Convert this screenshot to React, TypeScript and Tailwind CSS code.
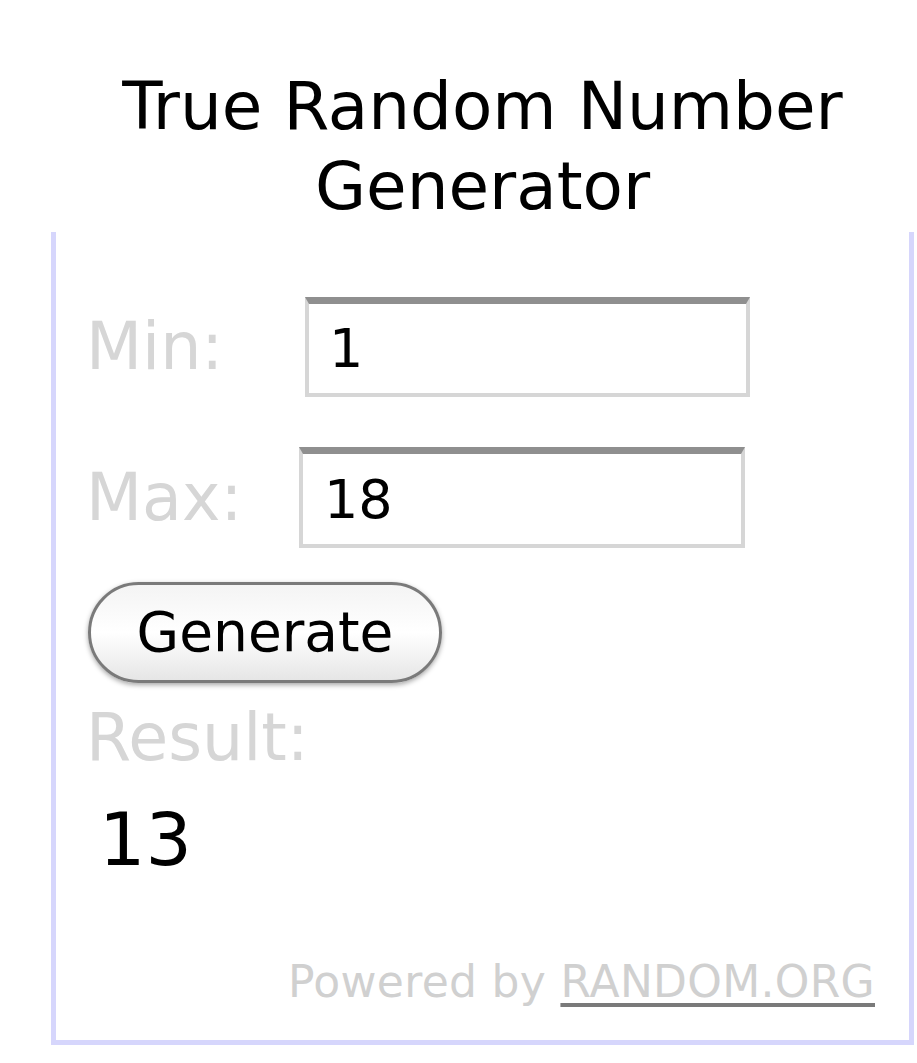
import React from "react";

export default function App() {
  const font = { fontFamily: '"DejaVu Sans", Verdana, sans-serif' };
  return (
    <div className="w-[917px] h-[1063px] bg-white overflow-hidden" style={font}>
      <div className="ml-[51px] w-[863px]">
        <h1 className="pt-[67px] text-center text-[66px] leading-[80px] text-black font-normal">
          True Random Number
          <br />
          Generator
        </h1>
        <div className="mt-[5px] border-x-[5px] border-b-[5px] border-t-0 border-[#d6d6fc] pl-[30px] pb-[30px]">
          <div className="pt-[65px] flex items-center h-[165px]">
            <span className="text-[65px] leading-[80px] text-[#d6d6d6] w-[219px]">Min:</span>
            <div className="w-[445px] h-[100px] border-x-[4px] border-b-[4px] border-[#d6d6d6] border-t-[7px] border-t-[#8f8f8f] bg-white flex items-center pl-[20px] text-[54px] text-black">
              1
            </div>
          </div>
          <div className="mt-[50px] flex items-center h-[101px]">
            <span className="text-[65px] leading-[80px] text-[#d6d6d6] w-[213px]">Max:</span>
            <div className="w-[446px] h-[101px] border-x-[4px] border-b-[4px] border-[#d6d6d6] border-t-[7px] border-t-[#8f8f8f] bg-white flex items-center pl-[21px] text-[54px] text-black">
              18
            </div>
          </div>
          <div className="mt-[34px] ml-[2px] w-[354px] h-[101px] rounded-full border-[3px] border-[#7a7a7a] bg-gradient-to-b from-[#f4f4f4] via-[#ffffff] to-[#e6e6e6] shadow-[0_2px_5px_rgba(0,0,0,0.35)] flex items-center justify-center text-[55px] text-black">
            Generate
          </div>
          <div className="mt-[15px] text-[65px] leading-[80px] text-[#d6d6d6]">Result:</div>
          <div className="mt-[17px] pl-[13px] text-[73px] leading-[90px] text-black">13</div>
          <div className="mt-[69px] pr-[34px] text-right text-[44px] leading-[56px] text-[#d0d0d0] tracking-[0.3px]">
            Powered by{" "}
            <span className="underline decoration-[#7a7a7a] decoration-[4px] underline-offset-[6px]">RANDOM.ORG</span>
          </div>
        </div>
      </div>
    </div>
  );
}
